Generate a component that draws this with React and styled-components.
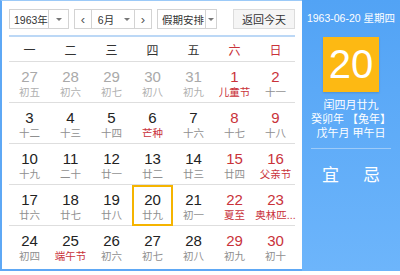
import React from 'react'
import styled, { createGlobalStyle } from 'styled-components'

const GlobalStyle = createGlobalStyle`
  html, body { margin: 0; padding: 0; background: #fff; }
  body { font-family: "Liberation Sans", "Noto Sans CJK SC", sans-serif; }
`;

const Widget = styled.div`
  display: flex;
  width: 400px;
  height: 271px;
`;

const Main = styled.div`
  width: 302px;
  box-sizing: border-box;
  border-left: 2px solid #5ea8f5;
  border-top: 1px solid #9ccaf8;
  border-bottom: 2px solid #5ea8f5;
  padding: 8px 7px 0 7px;
  display: flex;
  flex-direction: column;
  background: #fff;
`;

const Toolbar = styled.div`
  display: flex;
  align-items: center;
  height: 20px;
  gap: 5px;
  padding-bottom: 6px;
  border-bottom: 2px solid #bcd8f6;
`;

const SelectBox = styled.div`
  display: flex;
  height: 20px;
  box-sizing: border-box;
  border: 1px solid #d3d3d3;
  width: ${p => p.$w}px;
  font-size: 10.5px;
  color: #333;
`;

const SelLabel = styled.div`
  flex: 1;
  display: flex;
  align-items: center;
  justify-content: ${p => (p.$center ? 'center' : 'flex-start')};
  padding-left: ${p => (p.$center ? 0 : 4)}px;
  white-space: nowrap;
  overflow: hidden;
`;

const Caret = styled.div`
  width: ${p => p.$w || 19}px;
  flex-shrink: 0;
  display: flex;
  align-items: center;
  justify-content: center;
  border-left: ${p => (p.$line ? '1px solid #d3d3d3' : 'none')};
  &::after {
    content: '';
    border-left: 3px solid transparent;
    border-right: 3px solid transparent;
    border-top: 3px solid #777;
  }
`;

const Arrow = styled.div`
  width: 16px;
  flex-shrink: 0;
  display: flex;
  align-items: center;
  justify-content: center;
  font-size: 13px;
  color: #555;
  border-left: ${p => (p.$left ? '1px solid #d3d3d3' : 'none')};
  border-right: ${p => (p.$right ? '1px solid #d3d3d3' : 'none')};
`;

const TodayBtn = styled.div`
  margin-left: auto;
  width: 62px;
  height: 20px;
  box-sizing: border-box;
  border: 1px solid #dcdcdc;
  background: #f5f5f5;
  font-size: 11px;
  color: #333;
  display: flex;
  align-items: center;
  justify-content: center;
`;

const WeekRow = styled.div`
  display: grid;
  grid-template-columns: repeat(7, 41px);
  height: 24px;
  border-bottom: 1px solid #dedede;
`;

const WeekCell = styled.div`
  display: flex;
  align-items: center;
  justify-content: center;
  font-size: 12px;
  color: ${p => (p.$red ? '#c9323a' : '#333')};
`;

const Row = styled.div`
  display: grid;
  grid-template-columns: repeat(7, 41px);
  height: 41px;
  border-bottom: ${p => (p.$last ? 'none' : '1px solid #dedede')};
  box-sizing: border-box;
`;

const Cell = styled.div`
  display: flex;
  flex-direction: column;
  align-items: center;
  padding-top: 6px;
  box-sizing: border-box;
  ${p => p.$selected && `
    border: 2px solid #f5b400;
    margin-bottom: -1px;
    padding-top: 4px;
  `}
`;

const DayNum = styled.div`
  font-size: 15px;
  line-height: 17px;
  color: ${p => (p.$tone === 'gray' ? '#a9a9a9' : p.$tone === 'red' ? '#c9323a' : '#222')};
`;

const Lunar = styled.div`
  font-size: 10.5px;
  line-height: 14px;
  white-space: nowrap;
  color: ${p => (p.$red ? '#c9323a' : p.$faded ? '#b0b0b0' : '#8f8f8f')};
`;

const Side = styled.div`
  flex: 1;
  background: linear-gradient(#52a3f5, #6db5fb);
  color: #fff;
  display: flex;
  flex-direction: column;
  align-items: center;
  padding-top: 12px;
`;

const SideDate = styled.div`
  font-size: 10.5px;
  line-height: 13px;
  white-space: nowrap;
`;

const BigDay = styled.div`
  margin-top: 12px;
  width: 56px;
  height: 55px;
  background: #fdb913;
  display: flex;
  align-items: center;
  justify-content: center;
  font-size: 40px;
  color: #fff;
  box-shadow: 0 1px 2px rgba(0,0,0,0.15);
`;

const SideLines = styled.div`
  margin-top: 6px;
  font-size: 11px;
  line-height: 14px;
  text-align: center;
  white-space: nowrap;
  padding-bottom: 8px;
  width: 80px;
  border-bottom: 1px solid #9dcbf9;
`;

const YiJi = styled.div`
  display: flex;
  gap: 24px;
  margin-top: 12px;
  font-size: 17px;
`;

const weeks = ['一', '二', '三', '四', '五', '六', '日'];

const rows = [
  [['27', '初五', 'gray', 0], ['28', '初六', 'gray', 0], ['29', '初七', 'gray', 0], ['30', '初八', 'gray', 0], ['31', '初九', 'gray', 0], ['1', '儿童节', 'red', 1], ['2', '十一', 'red', 0]],
  [['3', '十二'], ['4', '十三'], ['5', '十四'], ['6', '芒种', '', 1], ['7', '十六'], ['8', '十七', 'red'], ['9', '十八', 'red']],
  [['10', '十九'], ['11', '二十'], ['12', '廿一'], ['13', '廿二'], ['14', '廿三'], ['15', '廿四', 'red'], ['16', '父亲节', 'red', 1]],
  [['17', '廿六'], ['18', '廿七'], ['19', '廿八'], ['20', '廿九', '', 0, true], ['21', '初一'], ['22', '夏至', 'red', 1], ['23', '奥林匹...', 'red', 1]],
  [['24', '初四'], ['25', '端午节', '', 1], ['26', '初六'], ['27', '初七'], ['28', '初八'], ['29', '初九', 'red'], ['30', '初十', 'red']],
];

export default function App() {
  return (
    <>
      <GlobalStyle />
      <Widget>
        <Main>
          <Toolbar>
            <SelectBox $w={60}>
              <SelLabel>1963年</SelLabel>
              <Caret $line $w={19} />
            </SelectBox>
            <SelectBox $w={78}>
              <Arrow $right>&lsaquo;</Arrow>
              <SelLabel $center>6月</SelLabel>
              <Caret $w={14} />
              <Arrow $left>&rsaquo;</Arrow>
            </SelectBox>
            <SelectBox $w={60}>
              <SelLabel>假期安排</SelLabel>
              <Caret $line $w={10} />
            </SelectBox>
            <TodayBtn>返回今天</TodayBtn>
          </Toolbar>
          <WeekRow>
            {weeks.map((w, i) => (
              <WeekCell key={w} $red={i > 4}>{w}</WeekCell>
            ))}
          </WeekRow>
          {rows.map((r, ri) => (
            <Row key={ri} $last={ri === rows.length - 1}>
              {r.map(([d, l, tone, red, sel], ci) => (
                <Cell key={ci} $selected={sel}>
                  <DayNum $tone={tone}>{d}</DayNum>
                  <Lunar $red={!!red} $faded={tone === 'gray'}>{l}</Lunar>
                </Cell>
              ))}
            </Row>
          ))}
        </Main>
        <Side>
          <SideDate>1963-06-20 星期四</SideDate>
          <BigDay>20</BigDay>
          <SideLines>
            <div>闰四月廿九</div>
            <div>癸卯年 【兔年】</div>
            <div>戊午月 甲午日</div>
          </SideLines>
          <YiJi>
            <span>宜</span>
            <span>忌</span>
          </YiJi>
        </Side>
      </Widget>
    </>
  )
}
